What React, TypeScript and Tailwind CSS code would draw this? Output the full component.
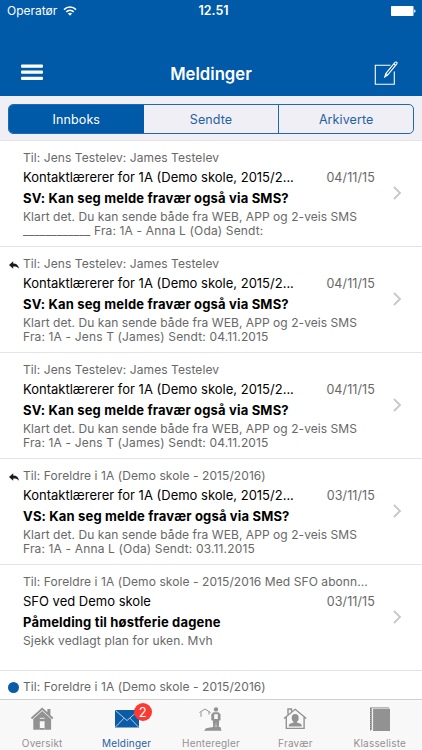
const SANS = "font-[Inter,'Liberation_Sans',sans-serif]";

type Message = {
  to: string;
  from: string;
  date: string;
  subject: string;
  body: string[];
  replied?: boolean;
};

const messages: Message[] = [
  {
    to: "Til: Jens Testelev: James Testelev",
    from: "Kontaktlærerer for 1A (Demo skole, 2015/2...",
    date: "04/11/15",
    subject: "SV: Kan seg melde fravær også via SMS?",
    body: ["Klart det. Du kan sende både fra WEB, APP og 2-veis SMS", "____________ Fra: 1A - Anna L (Oda) Sendt:"],
  },
  {
    to: "Til: Jens Testelev: James Testelev",
    from: "Kontaktlærerer for 1A (Demo skole, 2015/2...",
    date: "04/11/15",
    subject: "SV: Kan seg melde fravær også via SMS?",
    body: ["Klart det. Du kan sende både fra WEB, APP og 2-veis SMS", "Fra: 1A - Jens T (James) Sendt: 04.11.2015"],
    replied: true,
  },
  {
    to: "Til: Jens Testelev: James Testelev",
    from: "Kontaktlærerer for 1A (Demo skole, 2015/2...",
    date: "04/11/15",
    subject: "SV: Kan seg melde fravær også via SMS?",
    body: ["Klart det. Du kan sende både fra WEB, APP og 2-veis SMS", "Fra: 1A - Jens T (James) Sendt: 04.11.2015"],
  },
  {
    to: "Til: Foreldre i 1A (Demo skole - 2015/2016)",
    from: "Kontaktlærerer for 1A (Demo skole, 2015/2...",
    date: "03/11/15",
    subject: "VS: Kan seg melde fravær også via SMS?",
    body: ["Klart det. Du kan sende både fra WEB, APP og 2-veis SMS", "Fra: 1A - Anna L (Oda) Sendt: 03.11.2015"],
    replied: true,
  },
  {
    to: "Til: Foreldre i 1A (Demo skole - 2015/2016 Med SFO abonn...",
    from: "SFO ved Demo skole",
    date: "03/11/15",
    subject: "Påmelding til høstferie dagene",
    body: ["Sjekk vedlagt plan for uken. Mvh"],
  },
];

function StatusBar() {
  return (
    <div className="grid h-[22px] grid-cols-3 items-center px-[7px] text-[12px] text-white">
      <div className="flex items-center gap-[6px]">
        <span>Operatør</span>
        <svg width="14" height="10" viewBox="0 0 14 10" fill="none" stroke="currentColor" strokeWidth="1.6">
          <path d="M1 3.6C4.4.2 9.6.2 13 3.6" />
          <path d="M3.3 5.9c2.1-2 5.3-2 7.4 0" />
          <path d="M7 9.7 4.9 7.6c1.2-1.1 3-1.1 4.2 0z" fill="currentColor" stroke="none" />
        </svg>
      </div>
      <span className="pt-px pl-[5px] text-center text-[12.5px] font-semibold">12.51</span>
      <svg className="-mr-px justify-self-end" width="25" height="10" viewBox="0 0 25 10" fill="currentColor">
        <rect width="22.5" height="10" rx="0.8" />
        <path d="M23.2 3.2c1.8.5 1.8 3.1 0 3.6z" />
      </svg>
    </div>
  );
}

function Header() {
  return (
    <header className="h-24 shrink-0 bg-[#005aa8]">
      <StatusBar />
      <div className="mt-[29px] flex h-[45px] items-center justify-between pr-[24px] pl-[21px] text-white">
        <svg className="mb-[2px]" width="22" height="17" viewBox="0 0 22 17" fill="currentColor">
          <rect y="0.5" width="22" height="3.2" rx="1" />
          <rect y="6.6" width="22" height="3.2" rx="1" />
          <rect y="12.7" width="22" height="3.2" rx="1" />
        </svg>
        <h1 className="pt-[2px] pl-[5px] text-[16.7px] font-semibold">Meldinger</h1>
        <svg className="mb-px" width="24" height="24" viewBox="0 0 24 24" fill="none" stroke="currentColor" strokeWidth="1.1">
          <path d="M16.5 4.2H1.3v19h19V10.5" />
          <path d="m10.8 16 1-3.4L21 1.3c1-.9 2.6.3 1.8 1.5L13.6 14z" />
          <path d="m12 12.7 1.6 1.2M19.7 3l1.8 1.4" />
        </svg>
      </div>
    </header>
  );
}

function Segments() {
  return (
    <div className="h-[44px] shrink-0 bg-[#f0eff5] px-2 pt-2">
      <div className="grid h-[30px] grid-cols-3 overflow-hidden rounded-[5px] border border-[#1f69ae] text-center text-[12.5px] leading-[29px] tracking-[0.1px] text-[#1f62a4]">
        <div className="bg-[#005aa8] text-white">Innboks</div>
        <div>Sendte</div>
        <div className="border-l border-[#1f69ae]">Arkiverte</div>
      </div>
    </div>
  );
}

function ReplyIcon() {
  return (
    <svg width="10" height="9" viewBox="0 0 10 9" fill="#1a1a1a">
      <path d="M4.2.3v2.2c3.4 0 5.3 1.7 5.8 5.3C8.6 6 6.8 5.5 4.2 5.6v2.2L0 4z" />
    </svg>
  );
}

function MessageRow({ message }: { message: Message }) {
  return (
    <li className="flex h-[106px] items-center border-b border-[#e4e4e6]">
      <div className="flex h-full w-[23px] shrink-0 justify-end pt-[14px] pr-[4px]">{message.replied && <ReplyIcon />}</div>
      <div className="h-full w-[352px] shrink-0 pt-[8px] whitespace-nowrap">
        <div className="text-[12px] leading-[18px] tracking-[0.08px] text-[#686868]">{message.to}</div>
        <div className="flex h-[21px] items-center justify-between pt-px text-[13px]">
          <span>{message.from}</span>
          <span className="text-[12.5px] tracking-[0.1px] text-[#686868]">{message.date}</span>
        </div>
        <div className="text-[13px] leading-[20px] font-bold tracking-[0.17px]">{message.subject}</div>
        <div className="pt-[2px] text-[12px] leading-[14px] tracking-[0.15px] text-[#686868]">
          {message.body.map((line) => (
            <div key={line} className="not-last:tracking-[0.06px]">
              {line}
            </div>
          ))}
        </div>
      </div>
      <svg className="mb-px ml-[18px]" width="9" height="14" viewBox="0 0 9 14" fill="none" stroke="#c7c7cc" strokeWidth="1.8">
        <path d="m1 1 6 6-6 6" />
      </svg>
    </li>
  );
}

function HomeIcon() {
  return (
    <svg width="24" height="24" viewBox="0 0 24 24" fill="#929292">
      <path d="M12.2.5.8 10.8l1.3 1.4L12.2 3.1l10 9.1 1.2-1.4-3-2.8V2h-3v3.3z" />
      <path d="M12.2 4 3.3 12v10.8h6.5v-8.6h4.8v8.6h6.5V12z" />
      <path d="M9.8 21h4.8v1.8H9.8z" />
      <path d="M9.8 11.3h4.8" stroke="#f8f8f8" strokeWidth="0.9" />
    </svg>
  );
}

function MailIcon() {
  return (
    <svg width="24" height="24" viewBox="0 0 24 24">
      <rect y="3" width="24" height="17.5" fill="#0b5ba7" />
      <path d="m.5 3.5 11.5 10 11.5-10M.5 20 9 11.2M23.5 20 15 11.2" fill="none" stroke="#dce8f3" strokeWidth="0.8" />
    </svg>
  );
}

function PickupIcon() {
  return (
    <svg width="24" height="24" viewBox="0 0 24 24" fill="#929292">
      <path d="M.5 5.5 6 2l5.5 3.5M2 5.2v4.6M10 5v2.5" fill="none" stroke="#929292" strokeWidth="1" />
      <circle cx="17" cy="2.4" r="2.2" />
      <path d="M14.5 5.2h5l2 2v6l-1.3.2-.5 8.1h-2.1L17 15l-.6 6.5h-2.1l-.5-8.1-1.5-.2v-6z" />
      <path d="M15.2 7.2h3.6v4.8h-3.6z" fill="#f8f8f8" />
      <path d="M7 21.3 14 20h7.5l1 3.8H5z" />
    </svg>
  );
}

function AbsenceIcon() {
  return (
    <svg width="24" height="24" viewBox="0 0 24 24" fill="#929292">
      <path d="M1 11.5 12.2 2.3l11.1 9.2M3.3 10v11.4h17.8V10M5 7.5V2h3.5v2.4" fill="none" stroke="#929292" strokeWidth="1.4" />
      <ellipse cx="12.2" cy="11" rx="3.5" ry="4" />
      <path d="M10.5 13.5h3.4v2l3.8 1.2c1 .4 1 1.6 1 2.8H5.8c0-1.2 0-2.4 1-2.8l3.7-1.2z" />
    </svg>
  );
}

function BookIcon() {
  return (
    <svg width="24" height="24" viewBox="0 0 24 24" fill="#929292">
      <path d="M5 1.7h17V24H5z" />
      <path d="M2 .2h19v1H4V23H2z" fill="#a4a4a4" />
      <path d="M4.7 1.2V23.5" stroke="#e8e8e8" strokeWidth="0.6" />
      <path d="M2.5 1v22.5" stroke="#777" strokeDasharray="1 1" strokeWidth="1" />
    </svg>
  );
}

const tabs = [
  { label: "Oversikt", Icon: HomeIcon },
  { label: "Meldinger", Icon: MailIcon, badge: 2 },
  { label: "Henteregler", Icon: PickupIcon },
  { label: "Fravær", Icon: AbsenceIcon },
  { label: "Klasseliste", Icon: BookIcon },
];

function TabBar() {
  return (
    <nav className="grid h-[51px] shrink-0 grid-cols-5 border-t border-[#cfcfcf] bg-[#f8f8f8]">
      {tabs.map(({ label, Icon, badge }) => (
        <div key={label} className="flex flex-col items-center pt-[7px]">
          <div className="relative">
            <Icon />
            {badge && (
              <span className="absolute -top-[4px] left-[19px] size-[18px] rounded-full bg-[#fb3b33] text-center text-[13px] leading-[18px] text-white">
                {badge}
              </span>
            )}
          </div>
          <span className={`mt-[5px] text-[10px] leading-[14px] tracking-[0.2px] ${badge ? "text-[#1f62a4]" : "text-[#929292]"}`}>{label}</span>
        </div>
      ))}
    </nav>
  );
}

export default function App() {
  return (
    <div className={`flex h-[750px] w-[422px] flex-col overflow-hidden bg-white text-black ${SANS}`}>
      <Header />
      <Segments />
      <ul className="min-h-0 flex-1 overflow-hidden border-t border-[#e4e4e6]">
        {messages.map((message, i) => (
          <MessageRow key={i} message={message} />
        ))}
        <li className="flex items-center pt-[7px] pl-[8px] text-[12px] leading-[18px] tracking-[0.08px] whitespace-nowrap text-[#686868]">
          <span className="mr-[4px] size-[11px] rounded-full bg-[#0b5ba7]" />
          Til: Foreldre i 1A (Demo skole - 2015/2016)
        </li>
      </ul>
      <TabBar />
    </div>
  );
}
